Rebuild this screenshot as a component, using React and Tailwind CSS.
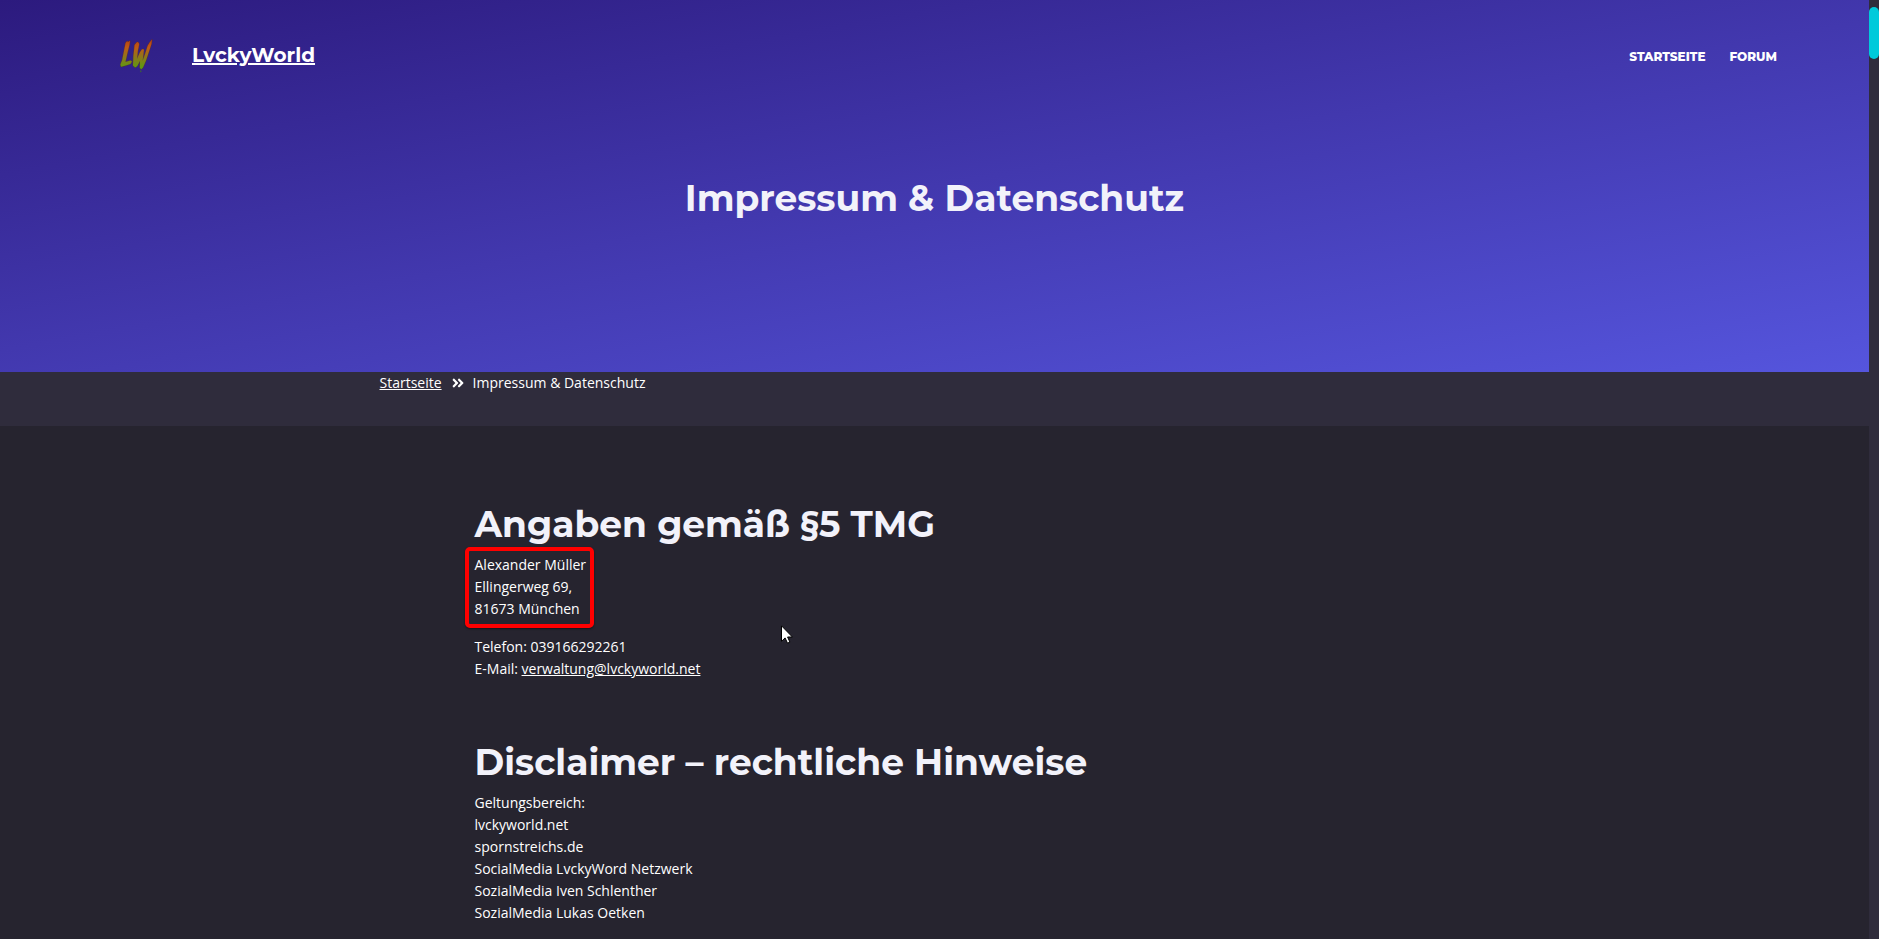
import { FaAngleDoubleRight } from "react-icons/fa";

function Logo() {
  return (
    <svg viewBox="0 0 34 34" className="h-[34px] w-[34px]" role="img" aria-label="LW">
      <defs>
        <linearGradient id="flame" x1="0" y1="0" x2="0" y2="34" gradientUnits="userSpaceOnUse">
          <stop offset="0" stopColor="#b8400f" />
          <stop offset="0.25" stopColor="#c05a16" />
          <stop offset="0.55" stopColor="#8a7a1a" />
          <stop offset="0.85" stopColor="#5c9a10" />
          <stop offset="1" stopColor="#2c5a30" />
        </linearGradient>
      </defs>
      <g strokeLinejoin="round">
        <g fill="#4a2440" stroke="#4a2440" strokeWidth="1">
          <path d="M5.6 4 L7.2 2 L7.8 3.2 L10 1.8 L9.4 6 L7.4 14 L5.4 23 L10.4 21.4 L12 22.4 L10.4 25 L4.8 26.8 L1 27.8 L0.4 25.6 L2.2 21 L4 12 Z" />
          <path d="M14.6 6 L16.6 3.4 L18 3 L19.2 5 L17.8 12 L17 20 L19.8 13.6 L22 10.2 L24 10.6 L23.2 17 L22.6 22 L25.4 14 L27.8 6.6 L30 3 L32 0.6 L31.4 5 L28.8 13 L26 21.4 L23 28.4 L21.2 30.4 L19.8 28.8 L20 21.8 L17.2 27.2 L15 28.6 L13 26.6 L13.4 17 L14.2 10 Z" />
        </g>
        <g fill="url(#flame)" stroke="url(#flame)" strokeWidth="0.2">
          <path d="M5.6 4 L7.2 2 L7.8 3.2 L10 1.8 L9.4 6 L7.4 14 L5.4 23 L10.4 21.4 L12 22.4 L10.4 25 L4.8 26.8 L1 27.8 L0.4 25.6 L2.2 21 L4 12 Z" />
          <path d="M14.6 6 L16.6 3.4 L18 3 L19.2 5 L17.8 12 L17 20 L19.8 13.6 L22 10.2 L24 10.6 L23.2 17 L22.6 22 L25.4 14 L27.8 6.6 L30 3 L32 0.6 L31.4 5 L28.8 13 L26 21.4 L23 28.4 L21.2 30.4 L19.8 28.8 L20 21.8 L17.2 27.2 L15 28.6 L13 26.6 L13.4 17 L14.2 10 Z" />
          <path d="M20.2 31.6 L21.6 32 L20.6 33.4 Z" />
        </g>
      </g>
    </svg>
  );
}

function Heading({ children }) {
  return <h2 className="font-['Montserrat','Inter',sans-serif] text-[36px] leading-[44px] font-bold text-[#f2f2fa]">{children}</h2>;
}

export default function App() {
  return (
    <div className="flex h-screen overflow-hidden bg-[#2f2c3c] font-['Open_Sans',sans-serif] text-[14px] leading-[22px] text-white">
      <div className="min-w-0 flex-1">
        <header className="bg-[linear-gradient(170deg,#2c1a7e_0%,#4238ae_50%,#5555dd_100%)] px-[92px] pt-9 pb-[150px]">
          <div className="flex h-10 items-center justify-between pl-7">
            <a href="#start" className="flex items-center gap-[38px] font-['Montserrat','Inter',sans-serif] text-[20px] leading-6 font-bold">
              <Logo />
              <span className="pb-0.5 underline">LvckyWorld</span>
            </a>
            <nav className="flex gap-6 pt-0.5 font-['Montserrat','Inter',sans-serif] text-[12px] leading-5 font-extrabold uppercase">
              <a href="#start">Startseite</a>
              <a href="#forum">Forum</a>
            </nav>
          </div>
          <h1 className="mt-[98px] text-center font-['Montserrat','Inter',sans-serif] text-[36px] leading-[48px] font-bold text-[#f2f2fa]">
            Impressum &amp; Datenschutz
          </h1>
        </header>

        <nav aria-label="Brotkrumen" className="h-[54px]">
          <div className="mx-auto flex max-w-[1110px] items-center">
            <a href="#start" className="underline">Startseite</a>
            <FaAngleDoubleRight className="mr-2 ml-[9px] h-[14px] w-[14px]" />
            <span>Impressum &amp; Datenschutz</span>
          </div>
        </nav>

        <main className="min-h-screen bg-[#26242f] pt-[76px]">
          <div className="mx-auto flex max-w-[920px] flex-col gap-[60px]">
            <section>
              <Heading>Angaben gemäß §5 TMG</Heading>
              <div className="relative mt-2 w-fit">
                <p>
                  Alexander Müller<br />
                  Ellingerweg 69,<br />
                  81673 München
                </p>
                <span className="absolute -top-[7px] -right-2 -bottom-2 -left-[10px] rounded-[5px] border-4 border-[#ff0000] shadow-[0_1px_2px_rgba(0,0,0,0.5)]" />
              </div>
              <p className="mt-4">
                Telefon: 039166292261<br />
                E-Mail: <a href="mailto:verwaltung@lvckyworld.net" className="underline">verwaltung@lvckyworld.net</a>
              </p>
            </section>
            <section>
              <Heading>Disclaimer – rechtliche Hinweise</Heading>
              <p className="mt-2">
                Geltungsbereich:<br />
                lvckyworld.net<br />
                spornstreichs.de<br />
                SocialMedia LvckyWord Netzwerk<br />
                SozialMedia Iven Schlenther<br />
                SozialMedia Lukas Oetken
              </p>
            </section>
          </div>
        </main>
      </div>

      <div className="w-[10px] shrink-0 bg-[#2f2c3c] pt-[7px]">
        <div className="h-[52px] rounded-full bg-[#00cadb]" />
      </div>

      <svg viewBox="0 0 12 19" className="absolute top-[625px] left-[781px] h-[19px] w-3" aria-hidden="true">
        <path d="M0.5 0.8 V16.4 L4.1 12.9 L6.5 18.2 L8.9 17.1 L6.6 12 H11.4 Z" fill="#fff" stroke="#000" strokeWidth="1" />
      </svg>
    </div>
  );
}
